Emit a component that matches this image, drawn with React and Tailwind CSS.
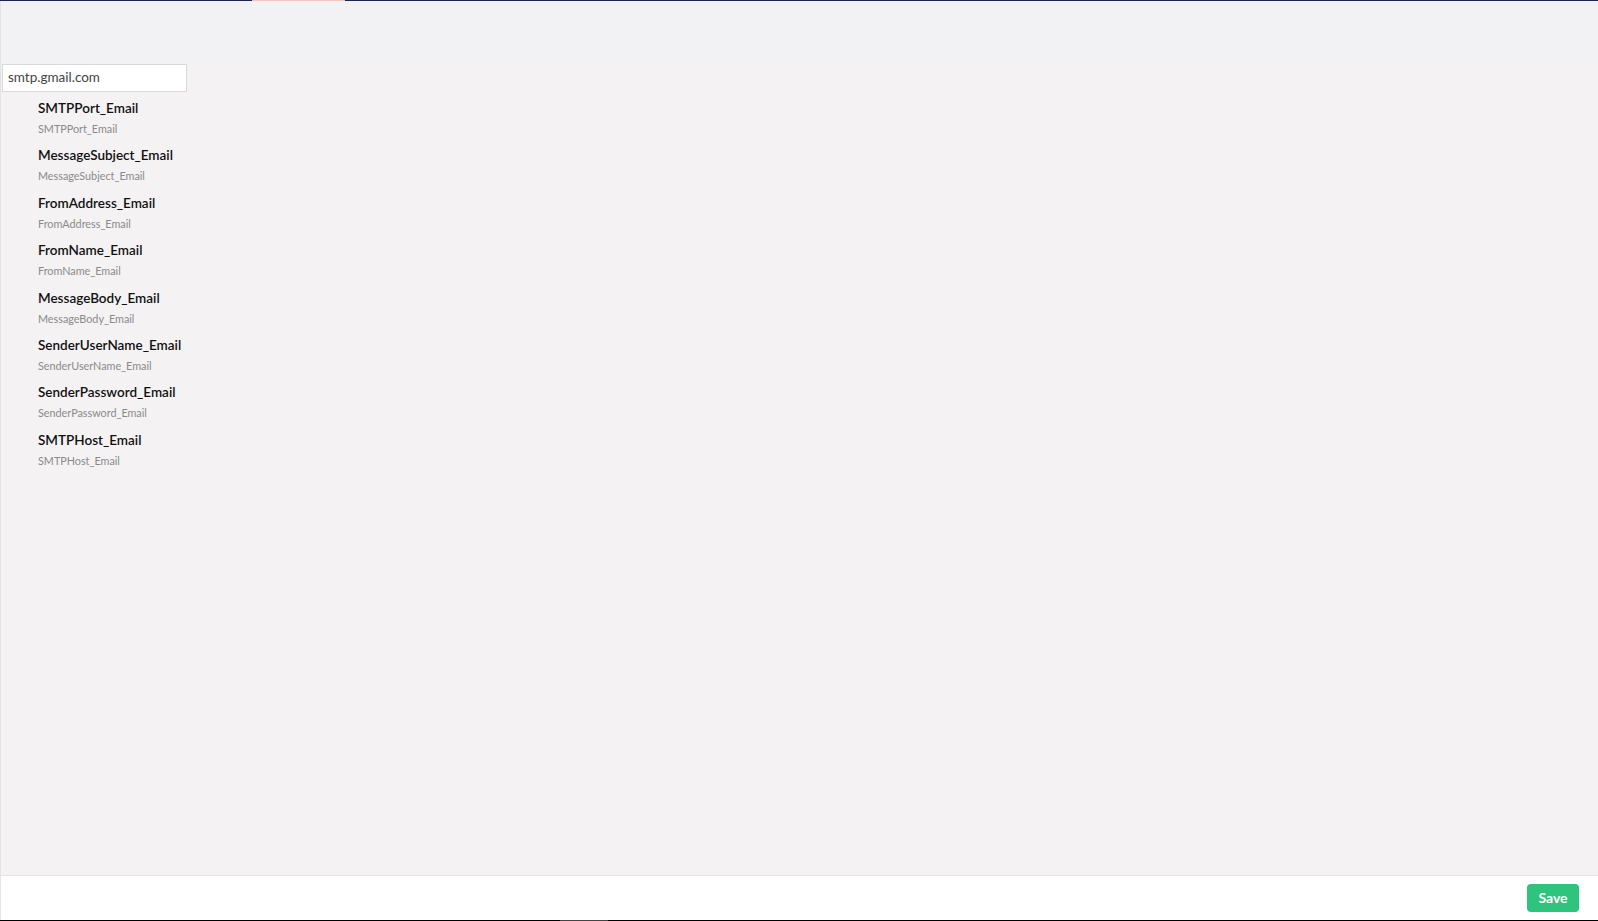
const fields = [
  "SMTPPort_Email",
  "MessageSubject_Email",
  "FromAddress_Email",
  "FromName_Email",
  "MessageBody_Email",
  "SenderUserName_Email",
  "SenderPassword_Email",
  "SMTPHost_Email",
];

export default function App() {
  return (
    <div className="h-screen flex flex-col bg-white font-['Lato','Noto_Sans',sans-serif]">
      {/* top strip with active tab marker */}
      <div className="flex h-px shrink-0 bg-[#1b2350]">
        <div className="w-[252px]" />
        <div className="w-[93px] bg-[#f7c1bd]" />
      </div>

      <div className="h-[63px] shrink-0 bg-[#f2f2f4] border-l border-[#e4e4e6]" />

      <main className="flex-1 bg-[#f4f2f3] border-l border-[#e4e2e3] pl-px overflow-hidden">
        <input
          readOnly
          value="smtp.gmail.com"
          className="block w-[185px] h-[28px] border border-[#d9d9d9] bg-white px-[5px] pb-[3px] text-[13.5px] text-[#444] outline-none"
        />
        <ul className="pt-[6px] pl-[36px]">
          {fields.map((f) => (
            <li key={f} className="h-[47.4px] flex flex-col">
              <span className="text-[13.5px] leading-[20px] font-semibold text-[#111]">{f}</span>
              <span className="mt-[3px] text-[10.8px] leading-[16px] text-[#8a8a8a]">{f}</span>
            </li>
          ))}
        </ul>
      </main>

      <footer className="h-[45px] shrink-0 border-t border-l border-[#e6e4e5] bg-white flex items-center justify-end pr-[19px]">
        <button className="w-[52px] h-[28px] pb-[2px] rounded-[4px] bg-[#2ec47d] text-white text-[14px] font-bold">
          Save
        </button>
      </footer>

      <div className="flex h-px shrink-0 bg-black">
        <div className="w-[560px]" />
        <div className="w-[48px] bg-[#444]" />
      </div>
    </div>
  );
}
